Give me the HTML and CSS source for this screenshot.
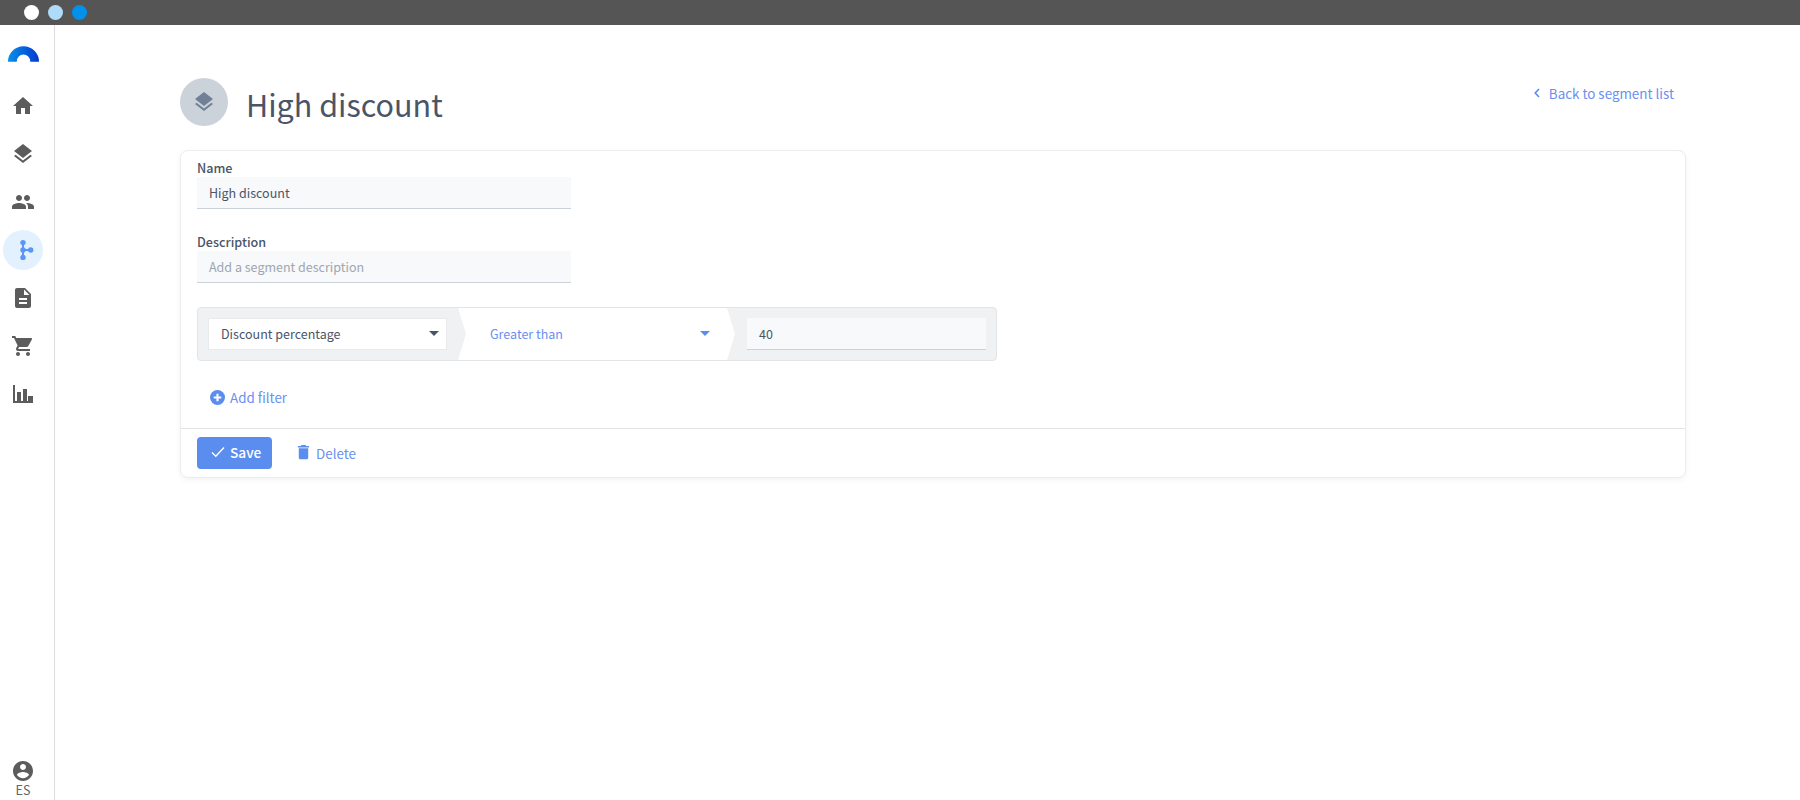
FILE: index.html
```html
<!DOCTYPE html>
<html lang="en">
<head>
<meta charset="utf-8">
<title>High discount</title>
<link rel="stylesheet" href="styles.css">
</head>
<body>
<div class="topbar">
  <span class="dot dot-white"></span><span class="dot dot-light"></span><span class="dot dot-blue"></span>
</div>
<div class="app">
  <nav class="sidebar">
    <svg class="logo" viewBox="0 0 32 16" width="31" height="16">
      <defs><linearGradient id="lg" x1="0" x2="1" y1="0" y2="0"><stop offset="0" stop-color="#0b8fe8"/><stop offset="1" stop-color="#0039d0"/></linearGradient></defs>
      <path d="M0 16A16 16 0 0 1 32 16H23A7 7.500 0 0 0 9 16Z" fill="url(#lg)"/>
    </svg>
    <div class="nav-list">
      <span class="nav-item"><svg viewBox="0 0 24 24" class="ico"><path d="M10 20v-6h4v6h5v-8h3L12 3 2 12h3v8z"/></svg></span>
      <span class="nav-item"><svg viewBox="0 0 24 24" class="ico"><path d="M11.990 18.540l-7.370-5.730L3 14.070l9 7 9-7-1.630-1.270-7.380 5.740zM12 16l7.360-5.730L21 9l-9-7-9 7 1.630 1.270L12 16z"/></svg></span>
      <span class="nav-item"><svg viewBox="0 0 24 24" class="ico"><path d="M16 11c1.660 0 2.990-1.340 2.990-3S17.660 5 16 5s-3 1.340-3 3 1.340 3 3 3zm-8 0c1.660 0 2.990-1.340 2.990-3S9.660 5 8 5 5 6.340 5 8s1.340 3 3 3zm0 2c-2.330 0-7 1.170-7 3.500V19h14v-2.500c0-2.330-4.670-3.500-7-3.500zm8 0c-.29 0-.62.020-.97.050 1.160.84 1.970 1.970 1.970 3.450V19h6v-2.500c0-2.330-4.670-3.500-7-3.500z"/></svg></span>
      <span class="nav-item nav-active"><svg viewBox="0 0 24 24" class="ico ico-blue"><path d="M11 4.600h2V11h6.700v2H13v6.400h-2z"/><circle cx="12" cy="4.600" r="2.700"/><circle cx="12" cy="12" r="2.700"/><circle cx="12" cy="19.400" r="2.700"/><circle cx="19.700" cy="12" r="2.700"/></svg></span>
      <span class="nav-item"><svg viewBox="0 0 24 24" class="ico"><path d="M14 2H6c-1.100 0-2 .9-2 2v16c0 1.100.9 2 2 2h12c1.100 0 2-.9 2-2V8l-6-6zm2 16H8v-2h8v2zm0-4H8v-2h8v2zm-3-5V3.500L18.500 9H13z"/></svg></span>
      <span class="nav-item"><svg viewBox="0 0 24 24" class="ico"><path d="M7 18c-1.100 0-1.990.9-1.990 2S5.900 22 7 22s2-.9 2-2-.9-2-2-2zM1 2v2h2l3.600 7.590-1.350 2.450c-.16.280-.25.610-.25.960 0 1.100.9 2 2 2h12v-2H7.420c-.14 0-.25-.11-.25-.25l.03-.12.9-1.630h7.450c.75 0 1.410-.41 1.750-1.030l3.580-6.490A1 1 0 0 0 20 4H5.210l-.94-2H1zm16 16c-1.100 0-1.990.9-1.990 2s.89 2 1.990 2 2-.9 2-2-.9-2-2-2z"/></svg></span>
      <span class="nav-item"><svg viewBox="0 0 24 24" class="ico"><path d="M2 3h2v16h2v-9h4v9h2V7h4v12h1v-5h5v7H2z"/></svg></span>
    </div>
    <div class="account">
      <svg viewBox="0 0 24 24" class="ico"><path d="M12 2C6.480 2 2 6.480 2 12s4.480 10 10 10 10-4.480 10-10S17.520 2 12 2zm0 3c1.660 0 3 1.340 3 3s-1.340 3-3 3-3-1.340-3-3 1.340-3 3-3zm0 14.200c-2.500 0-4.710-1.280-6-3.220.03-1.990 4-3.080 6-3.080 1.990 0 5.970 1.090 6 3.080-1.290 1.940-3.500 3.220-6 3.220z"/></svg>
      <span class="account-label">ES</span>
    </div>
  </nav>
  <main class="content">
    <header class="page-head">
      <div class="title-wrap">
        <span class="title-badge"><svg viewBox="0 0 24 24" class="badge-ico"><path d="M11.990 18.540l-7.370-5.730L3 14.070l9 7 9-7-1.630-1.270-7.380 5.740zM12 16l7.360-5.730L21 9l-9-7-9 7 1.630 1.270L12 16z"/></svg></span>
        <h1 class="title">High discount</h1>
      </div>
      <a class="back-link"><svg viewBox="0 0 6 10" class="back-ico"><path d="M5 1L1.200 5 5 9" fill="none" stroke="currentColor" stroke-width="1.600"/></svg>Back to segment list</a>
    </header>
    <section class="card">
      <div class="card-body">
        <div class="field field-name">
          <label class="field-label">Name</label>
          <div class="text-input">High discount</div>
        </div>
        <div class="field field-desc">
          <label class="field-label">Description</label>
          <div class="text-input placeholder">Add a segment description</div>
        </div>
        <div class="filter-row">
          <div class="filter-select"><span>Discount percentage</span><span class="caret"></span></div>
          <div class="filter-op"><span>Greater than</span><span class="caret caret-blue"></span></div>
          <div class="filter-value">40</div>
        </div>
        <a class="add-filter"><svg viewBox="0 0 16 16" class="add-ico"><circle cx="8" cy="8" r="8" fill="#5b8def"/><path d="M8 4v8M4 8h8" stroke="#fff" stroke-width="2.200"/></svg>Add filter</a>
      </div>
      <div class="card-foot">
        <button class="btn-save"><svg viewBox="0 0 14 12" class="save-ico"><path d="M1 6.500l3.800 3.800L13 1.500" fill="none" stroke="#fff" stroke-width="1.400"/></svg>Save</button>
        <a class="btn-delete"><svg viewBox="5 3 14 18" class="del-ico"><path d="M6 19c0 1.100.9 2 2 2h8c1.100 0 2-.9 2-2V7H6v12zM19 4h-3.500l-1-1h-5l-1 1H5v2h14V4z"/></svg>Delete</a>
      </div>
    </section>
  </main>
</div>
</body>
</html>
```
FILE: styles.css
```css
* { box-sizing: border-box; }
html, body { margin: 0; height: 100%; }
body {
  background: #fff;
  font-family: "Noto Sans CJK JP", "Noto Sans", sans-serif;
  color: #4a5568;
  overflow: hidden;
}
.topbar {
  height: 25px;
  background: #555;
  display: flex;
  align-items: center;
  gap: 9px;
  padding-left: 24px;
}
.dot { width: 15px; height: 15px; border-radius: 50%; }
.dot-white { background: #fff; }
.dot-light { background: #aedcf8; }
.dot-blue { background: #0091ea; }
.app { display: flex; height: 775px; }
.sidebar {
  width: 55px;
  border-right: 1px solid #dcdcdc;
  display: flex;
  flex-direction: column;
  align-items: flex-start;
  padding: 21px 0 0 3px;
  flex: none;
}
.logo { display: block; margin-left: 5px; }
.nav-list {
  display: flex;
  flex-direction: column;
  gap: 8px;
  margin-top: 24px;
}
.nav-item {
  width: 40px;
  height: 40px;
  border-radius: 50%;
  display: flex;
  align-items: center;
  justify-content: center;
}
.nav-active { background: #e3f1ff; }
.ico { width: 24px; height: 24px; fill: #5c5c5c; display: block; }
.ico-blue { fill: #5b95f5; }
.account {
  margin-top: auto;
  padding-bottom: 4px;
  width: 40px;
  display: flex;
  flex-direction: column;
  align-items: center;
}
.account-label { font-size: 12.500px; line-height: 13px; color: #5c6470; }
.content { flex: 1; padding: 53px 114px 0 125px; min-width: 0; }
.page-head {
  display: flex;
  justify-content: space-between;
  align-items: flex-start;
  height: 72px;
  padding-right: 12px;
}
.title-wrap { display: flex; align-items: flex-start; gap: 18px; }
.title-badge {
  width: 48px;
  height: 48px;
  border-radius: 50%;
  background: #cbd2da;
  display: flex;
  align-items: center;
  justify-content: center;
}
.badge-ico { width: 24px; height: 24px; fill: #718096; }
.title {
  margin: 0;
  font-size: 30.500px;
  line-height: 48px;
  font-weight: 400;
  color: #4a5568;
  padding-top: 2px;
}
.back-link {
  display: flex;
  align-items: center;
  gap: 9px;
  margin-top: 5px;
  font-size: 13.400px;
  line-height: 20px;
  color: #6b8ff0;
}
.back-ico { width: 6px; height: 10px; color: #5b8def; }
.card {
  border: 1px solid #ececec;
  border-radius: 8px;
  box-shadow: 0 2px 6px rgba(0, 0, 0, .05);
  height: 328px;
  display: flex;
  flex-direction: column;
}
.card-body { flex: 1; padding: 8px 16px 0; }
.field { width: 374px; }
.field-desc { margin-top: 24px; }
.field-label {
  display: block;
  font-size: 12.600px;
  line-height: 18px;
  font-weight: 500;
  color: #4a5568;
}
.text-input {
  height: 32px;
  background: #f7f9fb;
  border-bottom: 1px solid #cbd2da;
  padding-left: 12px;
  font-size: 12.500px;
  line-height: 31px;
  color: #4a5568;
}
.placeholder { color: #a0a6b0; }
.filter-row {
  margin-top: 24px;
  width: 800px;
  height: 54px;
  background: #f0f1f3;
  border: 1px solid #e3e4e6;
  border-radius: 4px;
  display: flex;
  align-items: center;
  padding: 0 10px;
}
.filter-select {
  width: 239px;
  height: 32px;
  background: #fff;
  border: 1px solid #e9eaec;
  display: flex;
  align-items: center;
  justify-content: space-between;
  padding: 0 7px 1px 12px;
  font-size: 12.500px;
  color: #4a5568;
  flex: none;
}
.caret {
  width: 0;
  height: 0;
  border-left: 5px solid transparent;
  border-right: 5px solid transparent;
  border-top: 5px solid #4a5568;
}
.filter-op {
  width: 277px;
  height: 52px;
  margin: 0 12px 0 11px;
  flex: none;
  background: #fff;
  clip-path: polygon(0 0, 269px 0, 277px 26px, 269px 100%, 0 100%, 8px 26px);
  display: flex;
  align-items: center;
  justify-content: space-between;
  padding: 0 25px 2px 32px;
  font-size: 12.500px;
  color: #6b8ff0;
}
.caret-blue { border-top-color: #5b8def; }
.filter-value {
  flex: 1;
  height: 32px;
  background: #f7f9fb;
  border-bottom: 1px solid #cbd2da;
  padding-left: 12px;
  font-size: 12.500px;
  line-height: 31px;
  color: #4a5568;
}
.add-filter {
  display: inline-flex;
  align-items: center;
  gap: 5px;
  margin: 26px 0 0 13px;
  font-size: 13.400px;
  line-height: 20px;
  color: #6b8ff0;
}
.add-ico { width: 15px; height: 15px; }
.card-foot {
  height: 49px;
  border-top: 1px solid #e3e4e6;
  display: flex;
  align-items: center;
  padding: 0 16px 1px;
  gap: 26px;
}
.btn-save {
  width: 75px;
  height: 32px;
  border: 0;
  border-radius: 4px;
  background: #5b8def;
  color: #fff;
  font-family: inherit;
  font-size: 13.700px;
  font-weight: 500;
  display: flex;
  align-items: center;
  gap: 5px;
  padding: 0 0 1px 14px;
}
.save-ico { width: 14px; height: 12px; }
.btn-delete {
  display: flex;
  align-items: center;
  gap: 7px;
  font-size: 13.400px;
  color: #6b8ff0;
}
.del-ico { width: 11px; height: 14.400px; fill: #5b8def; }
```
